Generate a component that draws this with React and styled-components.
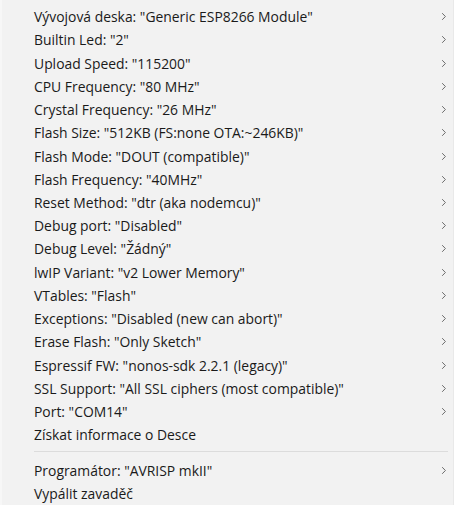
import React from "react";
import styled, { createGlobalStyle } from "styled-components";

const Global = createGlobalStyle`
  html, body { margin: 0; padding: 0; background: #f2f2f2; }
  body { font-family: "Open Sans", "Noto Sans", sans-serif; }
`;

const Menu = styled.div`
  width: 454px;
  height: 505px;
  box-sizing: border-box;
  background: #f2f2f2;
  border-left: 2px solid #f7f7f7;
  border-right: 1px solid #e9e9e9;
  padding-top: 5px;
  display: flex;
  flex-direction: column;
  overflow: hidden;
`;

const Row = styled.div`
  height: 23.25px;
  display: flex;
  align-items: center;
  padding-left: 32px;
  padding-right: 6px;
  font-size: 13.9px;
  color: #1a1a1a;
  white-space: nowrap;
`;

const Label = styled.span`
  flex: 1;
`;

const Chevron = styled.svg`
  width: 6px;
  height: 9px;
  flex: none;
`;

const Separator = styled.div`
  height: 1px;
  background: #dcdcdc;
  margin: 5px 5px 6px 32px;
`;

const items = [
  ['Vývojová deska: "Generic ESP8266 Module"', true],
  ['Builtin Led: "2"', true],
  ['Upload Speed: "115200"', true],
  ['CPU Frequency: "80 MHz"', true],
  ['Crystal Frequency: "26 MHz"', true],
  ['Flash Size: "512KB (FS:none OTA:~246KB)"', true],
  ['Flash Mode: "DOUT (compatible)"', true],
  ['Flash Frequency: "40MHz"', true],
  ['Reset Method: "dtr (aka nodemcu)"', true],
  ['Debug port: "Disabled"', true],
  ['Debug Level: "Žádný"', true],
  ['lwIP Variant: "v2 Lower Memory"', true],
  ['VTables: "Flash"', true],
  ['Exceptions: "Disabled (new can abort)"', true],
  ['Erase Flash: "Only Sketch"', true],
  ['Espressif FW: "nonos-sdk 2.2.1 (legacy)"', true],
  ['SSL Support: "All SSL ciphers (most compatible)"', true],
  ['Port: "COM14"', true],
  ['Získat informace o Desce', false],
];

const Arrow = () => (
  <Chevron viewBox="0 0 6 9">
    <path d="M1.2 1.2 L4.4 4.5 L1.2 7.8" fill="none" stroke="#6a6a6a" strokeWidth="1" />
  </Chevron>
);

const Item = ({ text, sub }) => (
  <Row>
    <Label>{text}</Label>
    {sub && <Arrow />}
  </Row>
);

export default function App() {
  return (
    <>
      <Global />
      <Menu>
        {items.map(([t, s]) => (
          <Item key={t} text={t} sub={s} />
        ))}
        <Separator />
        <Item text='Programátor: "AVRISP mkII"' sub />
        <Item text="Vypálit zavaděč" />
      </Menu>
    </>
  );
}
